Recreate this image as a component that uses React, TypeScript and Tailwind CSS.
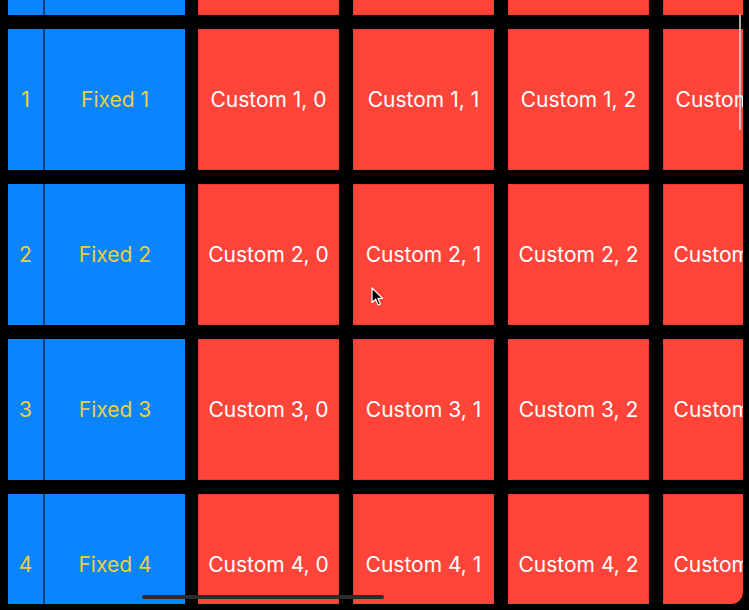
import React from 'react';

const rows = [0, 1, 2, 3, 4];
const cols = [0, 1, 2, 3];

// macOS style arrow pointer
const Pointer: React.FC = () => (
  <svg width="14" height="20" viewBox="0 0 14 20" className="absolute left-[371px] top-[287px]">
    <path
      d="M1 1 L1 15.5 L4.6 12.2 L7.2 18 L9.4 17 L6.9 11.4 L11.6 11.4 Z"
      fill="#000"
      stroke="#fff"
      strokeWidth={1.2}
      strokeLinejoin="round"
    />
  </svg>
);

// the first row is scrolled mostly out of view, its labels never show
const Row: React.FC<{ index: number; labels?: boolean }> = ({ index, labels = true }) => (
  <div className="flex h-[141px] w-max shrink-0 pl-[8px]">
    <div className="flex w-[35px] shrink-0 items-center justify-center bg-[#0a84ff] text-[#ecd03a]">
      {labels && index}
    </div>
    <div className="w-[2px] shrink-0 bg-[#12407a]" />
    <div className="flex w-[140px] shrink-0 items-center justify-center bg-[#0a84ff] text-[#ecd03a]">
      {labels && `Fixed ${index}`}
    </div>
    <div className="ml-[13px] flex shrink-0 gap-[14px]">
      {cols.map((c) => (
        <div
          key={c}
          className="flex w-[141px] shrink-0 items-center justify-center whitespace-nowrap bg-[#ff453a] text-white shadow-[inset_0_0_0_1px_rgba(0,0,0,0.08)]"
        >
          {labels && `Custom ${index}, ${c}`}
        </div>
      ))}
    </div>
  </div>
);

export default function App() {
  return (
    <div className="relative h-[610px] w-[749px] overflow-hidden bg-black font-['Inter',sans-serif] text-[21px]">
      <div className="h-[604px] w-[743px] overflow-hidden rounded-br-[12px]">
        <div className="mt-[-126px] flex flex-col gap-[14px]">
          {rows.map((r) => (
            <Row key={r} index={r} labels={r > 0} />
          ))}
        </div>
      </div>

      {/* scroll indicator */}
      <div className="absolute left-[739px] top-[14px] h-[116px] w-[2px] rounded-full bg-[#cfd6d6]/80" />

      {/* home indicator */}
      <div className="absolute left-[142px] top-[595px] h-[4px] w-[242px] rounded-full bg-[#2c2c2e]" />

      <Pointer />
    </div>
  );
}
